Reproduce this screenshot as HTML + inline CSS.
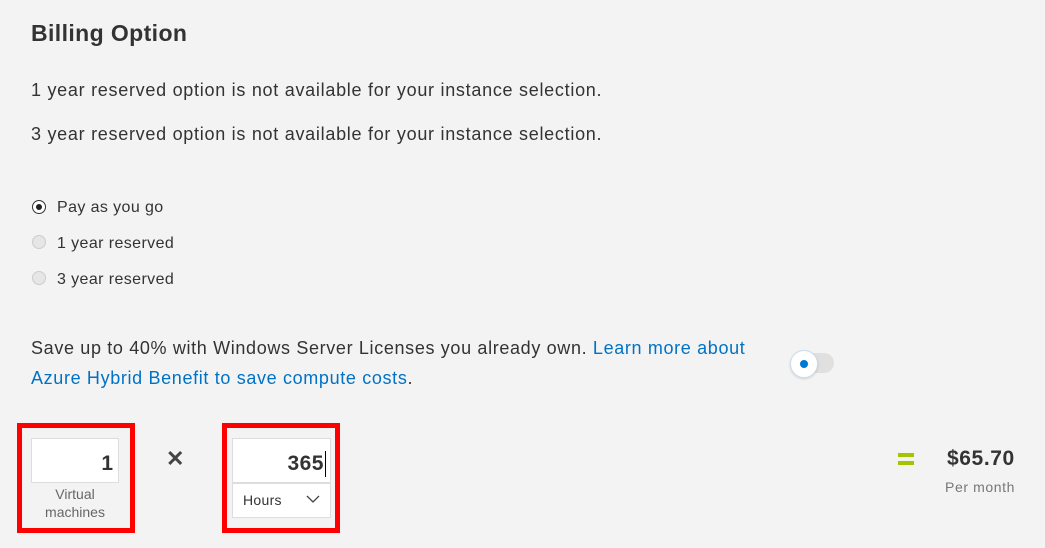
<!DOCTYPE html><html><head><style>
body{margin:0;width:1045px;height:548px;background:#f3f3f3;font-family:"Liberation Sans",sans-serif;color:#333;position:relative;overflow:hidden}
.a{position:absolute;white-space:nowrap}
.rb{position:absolute;border:5px solid #f00;box-sizing:border-box}
.in{position:absolute;background:#fff;border:1px solid #ddd;box-sizing:border-box;text-align:right;font-size:21px;font-weight:bold;color:#333;line-height:50px;padding-right:5px}
.r{position:absolute;width:14px;height:14px;border-radius:50%;box-sizing:border-box;border:1px solid #ccc;background:#e6e6e6}
.l{font-size:16px;letter-spacing:0.4px}
</style></head><body>
<div class="a" style="left:31px;top:20px;font-size:23px;font-weight:bold;color:#333;letter-spacing:0.4px">Billing Option</div>
<div class="a" style="left:31px;top:80px;font-size:18px;letter-spacing:0.72px">1 year reserved option is not available for your instance selection.</div>
<div class="a" style="left:31px;top:124px;font-size:18px;letter-spacing:0.72px">3 year reserved option is not available for your instance selection.</div>
<div class="r" style="left:32px;top:200px;border:1.5px solid #333;background:#fff"><div style="position:absolute;left:2.5px;top:2.5px;width:6px;height:6px;border-radius:50%;background:#222"></div></div>
<div class="a l" style="left:57px;top:199px">Pay as you go</div>
<div class="r" style="left:32px;top:235px"></div>
<div class="a l" style="left:57px;top:235px">1 year reserved</div>
<div class="r" style="left:32px;top:271px"></div>
<div class="a l" style="left:57px;top:271px">3 year reserved</div>
<div class="a" style="left:31px;top:333px;font-size:18px;letter-spacing:0.65px;line-height:30px">Save up to 40% with Windows Server Licenses you already own. <span style="color:#0072c6">Learn more about</span><br><span style="color:#0072c6">Azure Hybrid Benefit to save compute costs</span>.</div>
<div class="a" style="left:800px;top:353px;width:34px;height:20px;border-radius:10px;background:#e0e0e0"></div>
<div class="a" style="left:790px;top:350px;width:28px;height:28px;border-radius:50%;background:#fff;border:1px solid #cde;box-sizing:border-box;box-shadow:0 1px 2px rgba(0,0,0,.15)"><div style="position:absolute;left:9px;top:9px;width:8px;height:8px;border-radius:50%;background:#0078d4"></div></div>
<div class="rb" style="left:17px;top:423px;width:118px;height:110px"></div>
<div class="in" style="left:31px;top:438px;width:88px;height:45px">1</div>
<div class="a" style="left:31px;top:485px;width:88px;text-align:center;font-size:14px;color:#666;line-height:18px;white-space:normal">Virtual machines</div>
<div class="a" style="left:166px;top:446px;font-size:22px;font-weight:bold;color:#444">✕</div>
<div class="rb" style="left:222px;top:423px;width:118px;height:110px"></div>
<div class="in" style="left:232px;top:438px;width:99px;height:45px;padding-right:4px;letter-spacing:0.5px">365<span style="display:inline-block;width:1px;height:26px;background:#000;vertical-align:middle;margin-left:1px"></span></div>
<div class="a" style="left:232px;top:483px;width:99px;height:35px;background:#fff;border:1px solid #ddd;box-sizing:border-box"><span style="position:absolute;left:10px;top:8px;font-size:14px;letter-spacing:0.3px">Hours</span>
<svg style="position:absolute;left:73px;top:11px" width="14" height="9"><path d="M1 1L7 7L13 1" fill="none" stroke="#444" stroke-width="1.3"/></svg></div>
<div class="a" style="left:898px;top:453px;width:16px;height:4px;background:#a4c400"></div>
<div class="a" style="left:898px;top:461px;width:16px;height:4px;background:#a4c400"></div>
<div class="a" style="left:947px;top:447px;font-size:21px;font-weight:bold;color:#333;letter-spacing:0.6px">$65.70</div>
<div class="a" style="left:945px;top:479px;font-size:14px;color:#777;letter-spacing:0.6px">Per month</div>
</body></html>
